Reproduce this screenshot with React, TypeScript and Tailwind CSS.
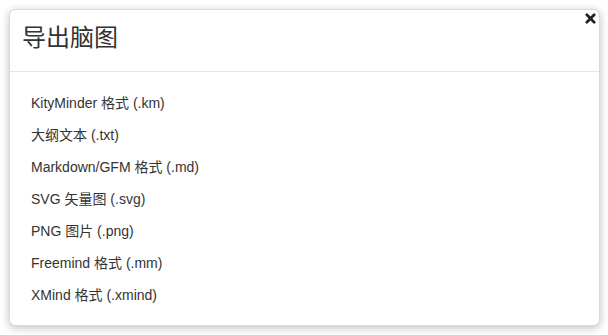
const formats = [
  "KityMinder 格式 (.km)",
  "大纲文本 (.txt)",
  "Markdown/GFM 格式 (.md)",
  "SVG 矢量图 (.svg)",
  "PNG 图片 (.png)",
  "Freemind 格式 (.mm)",
  "XMind 格式 (.xmind)",
];

export default function App() {
  return (
    <div
      className="w-[608px] h-[335px] bg-white p-[9px] pb-[9px] pr-[8px]"
      style={{ fontFamily: '"Liberation Sans", Arial, "Noto Sans CJK SC", sans-serif' }}
    >
      <div className="relative h-[317px] bg-white rounded-[6px] border border-black/15 shadow-[0_2px_8px_rgba(0,0,0,0.25)]">
        <button className="absolute right-[2px] top-[1px] w-[14px] h-[14px] flex items-center justify-center">
          <svg width="11" height="11" viewBox="0 0 12 12">
            <path d="M2 2L10 10M10 2L2 10" stroke="#222" strokeWidth="3" strokeLinecap="round" />
          </svg>
        </button>
        <div className="h-[62px] border-b border-[#e5e5e5] px-[12px] pb-[6px] flex items-center">
          <h3 className="text-[24px] text-[#333] leading-none font-normal">导出脑图</h3>
        </div>
        <ul className="px-[21px] pt-[15px]">
          {formats.map((f) => (
            <li key={f} className="h-[32px] flex items-center text-[14px] text-[#333]">
              {f}
            </li>
          ))}
        </ul>
      </div>
    </div>
  );
}
